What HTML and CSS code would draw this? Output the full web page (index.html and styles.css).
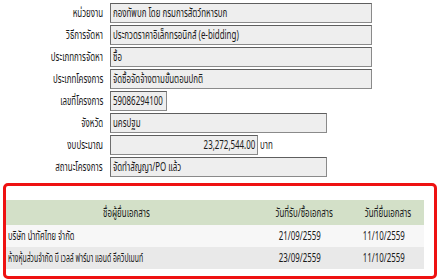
FILE: index.html
```html
<!DOCTYPE html>
<html lang="th">
<head>
<meta charset="utf-8">
<link rel="stylesheet" href="styles.css">
</head>
<body>
<div class="form">
  <div class="row"><span class="label"><span class="t tr-o">หน่วยงาน</span></span><span class="field w-full"><span class="t tl-o">กองทัพบก โดย กรมการสัตว์ทหารบก</span></span></div>
  <div class="row"><span class="label"><span class="t tr-o">วิธีการจัดหา</span></span><span class="field w-full"><span class="t tl-o">ประกวดราคาอิเล็กทรอนิกส์ (e-bidding)</span></span></div>
  <div class="row"><span class="label"><span class="t tr-o">ประเภทการจัดหา</span></span><span class="field w-full"><span class="t tl-o">ซื้อ</span></span></div>
  <div class="row"><span class="label"><span class="t tr-o">ประเภทโครงการ</span></span><span class="field w-full"><span class="t tl-o">จัดซื้อจัดจ้างตามขั้นตอนปกติ</span></span></div>
  <div class="row"><span class="label"><span class="t tr-o">เลขที่โครงการ</span></span><span class="field w-short"><span class="t tl-o">59086294100</span></span></div>
  <div class="row"><span class="label"><span class="t tr-o">จังหวัด</span></span><span class="field w-mid"><span class="t tl-o">นครปฐม</span></span></div>
  <div class="row"><span class="label"><span class="t tr-o">งบประมาณ</span></span><span class="field w-money num"><span class="t tr-o">23,272,544.00</span></span><span class="unit"><span class="t tl-o">บาท</span></span></div>
  <div class="row"><span class="label"><span class="t tr-o">สถานะโครงการ</span></span><span class="field w-mid"><span class="t tl-o">จัดทำสัญญา/PO แล้ว</span></span></div>
</div>
<div class="box">
  <div class="table">
    <div class="thead">
      <div class="c1 center"><span class="t tc-o">ชื่อผู้ยื่นเอกสาร</span></div>
      <div class="c2"><span class="t tr-o">วันที่รับ/ซื้อเอกสาร</span></div>
      <div class="c3"><span class="t tr-o">วันที่ยื่นเอกสาร</span></div>
    </div>
    <div class="trow odd">
      <div class="c1"><span class="t tl-o name">บริษัท นำทัศไทย จำกัด</span></div>
      <div class="c2"><span class="t tr-o">21/09/2559</span></div>
      <div class="c3"><span class="t tr-o">11/10/2559</span></div>
    </div>
    <div class="trow even">
      <div class="c1"><span class="t tl-o name-long">ห้างหุ้นส่วนจำกัด บี เวลล์ ฟาร์มา แอนด์ อีควิปเมนท์</span></div>
      <div class="c2"><span class="t tr-o">23/09/2559</span></div>
      <div class="c3"><span class="t tr-o">11/10/2559</span></div>
    </div>
  </div>
</div>
</body>
</html>
```
FILE: styles.css
```css
html, body {
  margin: 0;
  padding: 0;
  background: #ffffff;
}
body {
  width: 440px;
  height: 280px;
  overflow: hidden;
  font-family: "Tahoma", "Noto Sans Thai", "Noto Sans", "DejaVu Sans", sans-serif;
  font-size: 12px;
  color: #1a1a1a;
}
.t {
  display: inline-block;
  white-space: nowrap;
  transform: scaleX(0.66);
}
.t.name { transform: scaleX(0.63); }
.t.name-long { transform: scaleX(0.57); }
.tl-o { transform-origin: left center; }
.tr-o { transform-origin: right center; }
.tc-o { transform-origin: center center; }
.form {
  display: flex;
  flex-direction: column;
  gap: 2px;
  padding-top: 3px;
}
.row {
  display: flex;
  align-items: center;
  height: 20px;
}
.label {
  width: 103px;
  text-align: right;
  margin-right: 7px;
  white-space: nowrap;
}
.field {
  box-sizing: border-box;
  height: 20px;
  line-height: 18px;
  background: #eeeeee;
  border: 1px solid #8a8a8a;
  border-top-color: #5e5e5e;
  border-left-color: #6e6e6e;
  padding: 0 2px;
  white-space: nowrap;
  overflow: hidden;
}
.w-full { width: 262px; }
.w-short { width: 57px; }
.w-mid { width: 217px; }
.w-money { width: 148px; }
.num { text-align: right; }
.unit {
  margin-left: 2px;
}
.box {
  box-sizing: border-box;
  margin: 6px 0 0 3px;
  width: 434px;
  height: 96px;
  border: 3px solid #ee1111;
  border-radius: 5px;
  padding: 14px 10px 0 0;
}
.table {
  display: flex;
  flex-direction: column;
}
.thead, .trow {
  display: grid;
  grid-template-columns: 240px 95px 83px;
  align-items: center;
}
.thead {
  height: 25px;
  background: #d3e0c8;
}
.trow { height: 22px; }
.odd { background: #f7f7f7; }
.even { background: #e9e9e9; }
.c1 {
  padding-left: 2px;
  white-space: nowrap;
}
.c1.center {
  text-align: center;
  padding-left: 0;
}
.c2, .c3 {
  text-align: right;
  padding-right: 20px;
  white-space: nowrap;
}
```
